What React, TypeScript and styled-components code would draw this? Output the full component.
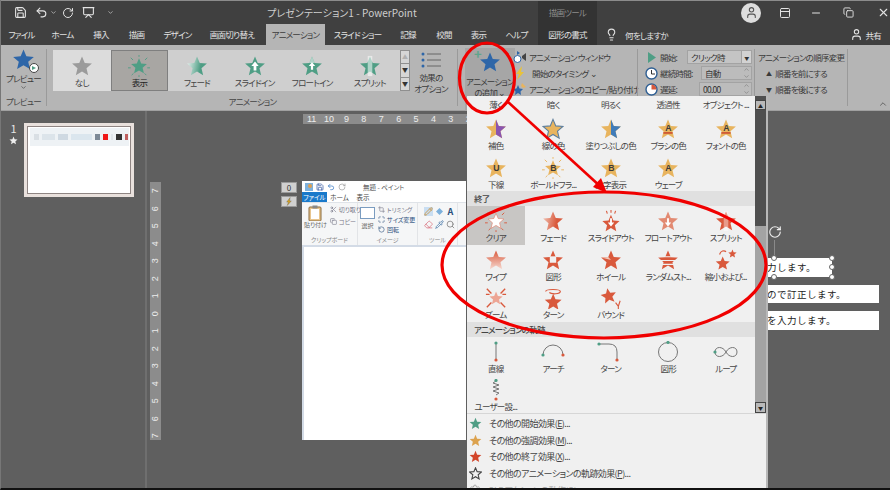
import React from "react";
import styled, { createGlobalStyle, css } from "styled-components";
import { Undo2, RotateCw, Presentation, Lightbulb, User, X, Minus, Copy, ChevronDown, ChevronUp, Save, PanelTop, Scissors, Pencil, Search, Pipette, Eraser, Crop, Maximize, RotateCcw, Settings } from "lucide-react";

const Global = createGlobalStyle`
  html, body { margin: 0; padding: 0; background: #5f5f5f; }
  * { box-sizing: border-box; }
  body { font-family: "Noto Sans CJK JP", "Noto Sans", sans-serif; font-feature-settings: "palt"; }
`;
const narrow = css`font-size: 8.5px; letter-spacing: -.75px;`;

const Page = styled.div`
  position: relative; width: 890px; height: 490px; overflow: hidden; background: #5f5f5f;
  display: flex; flex-direction: column; border-bottom: 2px solid #111; border-left: 1px solid #777;
`;
const TitleBar = styled.div`
  height: 24px; background: #404040; display: flex; align-items: center; color: #d8d8d8; flex: none;
  border-top: 1px solid #8c8c8c; padding-left: 14px; margin-left: -1px; position: relative;
`;
const QuickIcons = styled.div`display: flex; align-items: center; gap: 8px; width: 253px; color: #e4e4e4;`;
const DocTitle = styled.div`font-size: 10px; width: 271px; color: #cfcfcf; white-space: nowrap; letter-spacing: .05px;`;
const ToolTitle = styled.div`
  width: 59px; height: 100%; background: #333; color: #8d8d8d; ${narrow} text-align: center; line-height: 23px;
`;
const WindowIcons = styled.div`margin-left: auto; display: flex; align-items: center; gap: 15px; color: #e2e2e2;`;
const Avatar = styled.div`
  width: 20px; height: 20px; border-radius: 50%; background: #dedede; color: #555; display: flex; align-items: center; justify-content: center; margin-right: 3px;
`;
const TabBar = styled.div`height: 21px; background: #404040; display: flex; align-items: stretch; flex: none; margin-left: -1px;`;
const Tab = styled.div<{ $w: number; $active?: boolean; $dark?: boolean; $gap?: number }>`
  width: ${p => p.$w}px; margin-left: ${p => p.$gap || 0}px; text-align: center; ${narrow} line-height: 21px; white-space: nowrap;
  color: ${p => (p.$active ? "#3c3c3c" : "#e2e2e2")};
  background: ${p => (p.$active ? "#b5b5b5" : p.$dark ? "#333" : "transparent")};
`;
const TellMe = styled.div`display: flex; align-items: center; gap: 7px; margin-left: 8px; ${narrow} color: #e2e2e2;`;
const Share = styled.div`margin-left: auto; display: flex; align-items: center; gap: 2px; padding-right: 9px; ${narrow} color: #e2e2e2;`;

const Ribbon = styled.div`height: 66px; background: #b5b5b5; display: flex; flex: none; border-bottom: 1px solid #a0a0a0; color: #3a3a3a; position: relative; margin-left: -1px;`;
const Group = styled.div<{ $w: number }>`
  width: ${p => p.$w}px; flex: none; display: flex; flex-direction: column; position: relative;
  &::after { content: ""; position: absolute; right: 0; top: 4px; bottom: 4px; width: 1px; background: #9a9a9a; }
`;
const GroupBody = styled.div`flex: 1; display: flex; min-height: 0;`;
const GroupLabel = styled.div`height: 15px; ${narrow} line-height: 13px; text-align: center; color: #444;`;
const PreviewBtn = styled.div`flex: 1; display: flex; flex-direction: column; align-items: center; padding-top: 3px; ${narrow} line-height: 11px;`;
const IconStack = styled.div`position: relative; height: 25px; width: 28px; display: flex; justify-content: center; flex: none;`;
const PlayBadge = styled.div`
  position: absolute; right: -1px; bottom: 0; width: 10px; height: 10px; border-radius: 50%; background: #fff; border: 1px solid #444;
  &::after { content: ""; position: absolute; left: 2.5px; top: 1.5px; border-left: 4px solid #4f9e85; border-top: 2.5px solid transparent; border-bottom: 2.5px solid transparent; }
`;
const PlusBadge = styled.span`position: absolute; left: -2px; top: -4px; color: #5fa58c; font-size: 13px; font-weight: 700; line-height: 13px; letter-spacing: 0;`;
const EffectGallery = styled.div`
  margin: 5px 0 0 6px; width: 357px; height: 41px; background: #cfcfcf; display: flex; flex: none;
`;
const EffectCell = styled.div<{ $state?: string }>`
  width: 57.6px; flex: none; display: flex; flex-direction: column; align-items: center; padding-top: 4px; ${narrow} line-height: 11px; white-space: nowrap;
  background: ${p => (p.$state === "none" ? "#dcdcdc" : p.$state === "selected" ? "#a8a6a3" : "transparent")};
  border: ${p => (p.$state === "selected" ? "1px solid #7f7f7f" : "1px solid transparent")};
  color: ${p => (p.$state === "selected" ? "#222" : "#444")};
`;
const GalleryScroll = styled.div`margin-left: auto; width: 10px; display: flex; flex-direction: column; border: 1px solid #8f8f8f; background: #d6d6d6;`;
const GalleryScrollBtn = styled.div<{ $faint?: boolean }>`
  flex: 1; display: flex; align-items: center; justify-content: center; border-bottom: 1px solid #8f8f8f; color: ${p => (p.$faint ? "#b0b0b0" : "#333")};
  font-size: 6px; line-height: 1; &:last-child { border-bottom: 0; }
`;
const Options = styled.div`width: 48px; flex: none; display: flex; flex-direction: column; align-items: center; padding: 6px 0 0 0; ${narrow} line-height: 11px; text-align: center; white-space: nowrap; margin-left: -3px;`;
const AddButton = styled.div`
  width: 50px; margin: 3px 0 0 7px; height: 63px; padding-top: 3px; background: #a6a6a6; display: flex; flex-direction: column; align-items: center; ${narrow} line-height: 10.5px; white-space: nowrap; flex: none;
`;
const CmdList = styled.div`display: flex; flex-direction: column; padding: 4px 0 0 0; margin-left: -2px; ${narrow} color: #3a3a3a;`;
const Cmd = styled.div`height: 16px; display: flex; align-items: center; gap: 2px; white-space: nowrap;`;
const CmdIcon = styled.div`width: 14px; height: 14px; flex: none; display: flex; align-items: center; justify-content: center;`;
const TimingList = styled.div`flex: 1; display: flex; flex-direction: column; padding: 4px 3px 0 6px; ${narrow}`;
const TimingRow = styled.div`height: 16px; display: flex; align-items: center; gap: 2px; white-space: nowrap;`;
const Field = styled.div<{ $w: number; $lite?: boolean }>`
  width: ${p => p.$w}px; height: 14px; margin-left: auto; background: ${p => (p.$lite ? "#c4c4c4" : "#bcbcbc")}; border: 1px solid #a3a3a3;
  display: flex; align-items: center; padding-left: 3px; color: #333;
`;
const SpinBox = styled.div`margin-left: auto; width: 10px; display: flex; flex-direction: column; align-items: center; color: #777;`;
const DropBtn = styled.div`margin-left: auto; width: 10px; height: 100%; background: #d2d2d2; border-left: 1px solid #a3a3a3; display: flex; align-items: center; justify-content: center; font-size: 5px;`;
const OrderList = styled.div`display: flex; flex-direction: column; padding: 4px 0 0 3px; ${narrow} white-space: nowrap;`;
const OrderRow = styled.div`height: 16px; display: flex; align-items: center; gap: 4px; padding-left: 8px;`;
const OrderTitle = styled.div`height: 16px; line-height: 16px;`;
const Collapse = styled.div`position: absolute; right: 2px; bottom: 1px; color: #555; display: flex;`;

const Main = styled.div`flex: 1; display: flex; min-height: 0; margin-left: -1px;`;
const SlidePane = styled.div`width: 147px; flex: none; border-right: 2px solid #6f6f6f; display: flex; padding: 12px 0 0 9px; gap: 6px;`;
const ThumbNum = styled.div`color: #e6e6e6; font-size: 11px; line-height: 11px; width: 9px; display: flex; flex-direction: column; align-items: center; gap: 2px; padding-top: 0;`;
const Thumb = styled.div`width: 110px; height: 74px; background: #fff; border: 3px solid #e9e1dd; outline: 1px solid #8f8583; outline-offset: -4px; padding: 2px 2px 0 3px;`;
const ThumbTop = styled.div`height: 18px; background: #eef2f5; display: flex; align-items: center; gap: 3px; padding: 0 1px 0 4px;`;
const ThumbBlock = styled.div<{ $c: string; $w?: number; $push?: boolean }>`width: ${p => p.$w || 5}px; height: 6px; background: ${p => p.$c}; margin-left: ${p => (p.$push ? "auto" : "0")};`;

const Editor = styled.div`flex: 1; display: flex; flex-direction: column; padding-top: 3px; min-width: 0;`;
const HRuler = styled.div`
  margin-left: 156px; width: 165px; height: 10px; background: #8c8c8c; color: #ececec; font-size: 9px; line-height: 10px; display: flex; flex: none; font-family: "Liberation Sans", sans-serif;
`;
const HTick = styled.span`width: 17.4px; text-align: center; flex: none;`;
const Stage = styled.div`display: flex; align-items: flex-start; padding-top: 57px;`;
const VRuler = styled.div`
  width: 11px; height: 258px; margin: 1px 0 0 3px; background: #8c8c8c; color: #ececec; font-size: 9px; display: flex; flex-direction: column; align-items: center; flex: none; font-family: "Liberation Sans", sans-serif;
`;
const VTick = styled.span`height: 17.5px; line-height: 17.5px; transform: rotate(-90deg); flex: none;`;
const Tags = styled.div`margin: 1px 0 0 120px; width: 16px; display: flex; flex-direction: column; gap: 3px; flex: none;`;
const TagChip = styled.div`height: 11px; background: #d0d0d0; border: 1px solid #9a9a9a; color: #333; font-size: 8px; line-height: 9px; text-align: center; display: flex; align-items: center; justify-content: center;`;
const PaintWindow = styled.div`width: 164px; height: 259px; margin-left: 5px; background: #fff; flex: none; display: flex; flex-direction: column; overflow: hidden;`;
const PaintTitle = styled.div`height: 11px; display: flex; align-items: center; gap: 3px; font-size: 6.5px; color: #555; padding-left: 3px;`;
const PaintTabs = styled.div`height: 11px; display: flex; font-size: 6.5px; line-height: 11px; color: #444; border-bottom: 1px solid #dfe3e8;`;
const PaintTab = styled.div<{ $w: number; $file?: boolean }>`width: ${p => p.$w}px; text-align: center; background: ${p => (p.$file ? "#1979ca" : "transparent")}; color: ${p => (p.$file ? "#fff" : "#444")};`;
const PaintRibbon = styled.div`height: 44px; background: #f5f6f7; display: flex; border-bottom: 2px solid #d3dbe6; font-size: 6px; color: #666; flex: none;`;
const PaintGroup = styled.div<{ $w: number }>`width: ${p => p.$w}px; flex: none; border-right: 1px solid #e2e4e7; display: flex; flex-direction: column;`;
const PaintBody = styled.div`flex: 1; display: flex; padding: 2px 2px 0; gap: 3px; min-height: 0;`;
const PaintLabel = styled.div`height: 10px; line-height: 9px; text-align: center; color: #888;`;
const PaintBig = styled.div`width: 24px; display: flex; flex-direction: column; align-items: center; line-height: 8px; white-space: nowrap;`;
const PaintSmalls = styled.div`display: flex; flex-direction: column; gap: 1px; line-height: 9px; white-space: nowrap; color: #778;`;
const PaintSmall = styled.div`display: flex; align-items: center; gap: 2px;`;
const ToolGrid = styled.div`display: grid; grid-template-columns: repeat(3, 11px); grid-auto-rows: 13px; gap: 0; padding-left: 3px; align-items: center; justify-items: center;`;
const PaintCanvas = styled.div`flex: 1; background: #fff; border-left: 2px solid #d3dbe6;`;
const Boxes = styled.div`margin-left: 301px; width: 112px; display: flex; flex-direction: column; align-items: flex-start; flex: none; margin-top: 44px;`;
const Rotator = styled.div`
  height: 33px; width: 16px; margin-left: 1px; color: #eee; display: flex; position: relative;
  &::after { content: ""; position: absolute; left: 6px; top: 15px; bottom: 0; width: 1px; background: #8a8a8a; }
`;
const TextBox = styled.div<{ $w: number; $gap: number }>`
  position: relative; width: ${p => p.$w}px; height: 18.5px; background: #fff; margin-top: ${p => p.$gap}px; font-size: 9.5px; line-height: 18px; letter-spacing: .5px; color: #222; white-space: nowrap; font-feature-settings: normal;
`;
const Handle = styled.span<{ $x: number; $y: number }>`
  position: absolute; left: ${p => p.$x - 3}px; top: ${p => p.$y - 3}px; width: 6px; height: 6px; border-radius: 50%; background: #fff; border: 1px solid #666;
`;

const Dropdown = styled.div`
  position: absolute; left: 466px; top: 96px; width: 301px; height: 392px; background: #f0f0f0; border-right: 2px solid #b8b8b8; display: flex; flex-direction: column; overflow: hidden;
`;
const DropTop = styled.div`height: 318px; display: flex; flex: none; border-bottom: 1px solid #d6d6d6;`;
const DropItems = styled.div`width: 288px; flex: none;`;
const ItemRow = styled.div<{ $h?: number }>`display: grid; grid-template-columns: repeat(5, 57.5px); height: ${p => p.$h || 38.5}px;`;
const Item = styled.div<{ $hover?: boolean }>`
  display: flex; flex-direction: column; align-items: center; padding-top: 4px; ${narrow} line-height: 11px; color: #444; white-space: nowrap;
  background: ${p => (p.$hover ? "#c8c6c4" : "transparent")};
`;
const LabelOnly = styled(Item)`padding-top: 3px;`;
const Heading = styled.div`height: 15px; background: #e0e0e0; ${narrow} line-height: 15px; font-weight: 500; padding-left: 7px; color: #444;`;
const DropBar = styled.div`width: 11px; margin-left: 0; background: #4f4f4f; display: flex; flex-direction: column; flex: none;`;
const BarBtn = styled.div`height: 10px; background: #b9b9b9; border: 1px solid #444; margin-top: 4px; display: flex; align-items: center; justify-content: center; font-size: 5px; color: #222; flex: none;`;
const BarDown = styled(BarBtn)`margin-top: 0; height: 11px;`;
const BarThumb = styled.div`height: 176px; background: #a3a3a3; margin-top: auto; flex: none;`;
const MenuList = styled.div`padding-top: 1.5px; display: flex; flex-direction: column;`;
const MenuItem = styled.div<{ $off?: boolean }>`
  height: 16.6px; display: flex; align-items: center; font-size: 9px; letter-spacing: -.6px; color: ${p => (p.$off ? "#a8a8a8" : "#444")}; padding-left: 2px; gap: 7px; white-space: nowrap; flex: none;
  u { text-underline-offset: 1px; }
`;
const Annotations = styled.svg`position: absolute; left: 0; top: 0; width: 890px; height: 490px; pointer-events: none;`;
const Defs = styled.svg`position: absolute; width: 0; height: 0;`;

const PTS = "12,1.5 15,8.6 22.8,9.3 16.9,14.4 18.7,22 12,18 5.3,22 7.1,14.4 1.2,9.3 9,8.6";
const RIGHT = "12,1.5 15,8.6 22.8,9.3 16.9,14.4 18.7,22 12,18";
const OR = "#e8b45e", RD = "#d9593c", GR = "#4f9e85", BL = "#2e66a8";

const Rays: React.FC<{ c: string }> = ({ c }) => (
  <g stroke={c} strokeWidth="1">
    <path d="M12 0v2M3 3l2.5 2.5M21 3l-2.5 2.5M0 14h3M24 14h-3M4 22l2-2M20 22l-2-2M12 24v-2" />
  </g>
);
const Letter: React.FC<{ t: string; bar?: boolean; y?: number }> = ({ t, bar, y = 15.5 }) => (
  <>
    <text x="12" y={y} textAnchor="middle" fontSize="9.5" fontWeight="700" fill="#3b3b3b" fontFamily="Liberation Sans">{t}</text>
    {bar && <rect x="7" y="15.5" width="10" height="1.6" fill="#c9442c" />}
  </>
);

function art(kind: string, c: string) {
  const star = <polygon points={PTS} fill={c} />;
  switch (kind) {
    case "none": return <polygon points={PTS} fill="#9b9b9b" />;
    case "appear": return <g><polygon points={PTS} fill={GR} transform="translate(2.4 2.4) scale(.8)" /><Rays c={GR} /></g>;
    case "fade": return <polygon points={PTS} fill={c === GR ? "url(#fadeG)" : "url(#fadeR)"} />;
    case "slide": return <g>{star}<path d="M12 7l4 5h-2.5v5h-3v-5H8z" fill="#fff" /></g>;
    case "float": return <g>{star}<path d="M12 8l3.5 4H13.2v4h-2.4v-4H8.5z" fill="#fff" /><polygon points="12,1.5 15,8.6 9,8.6" fill="#fff" opacity=".55" /></g>;
    case "split": return <g>{star}<rect x="9.5" y="1" width="5" height="22" fill="#fff" opacity=".55" /></g>;
    case "comp": return <g>{star}<polygon points={RIGHT} fill="#8a55b0" /></g>;
    case "line": return <polygon points={PTS} fill={OR} stroke="#5c7d9c" strokeWidth="1.2" />;
    case "fillc": return <g>{star}<polygon points={RIGHT} fill="#3f7cba" /></g>;
    case "A": return <g>{star}<Letter t="A" bar y={14.5} /></g>;
    case "U": return <g>{star}<Letter t="U" /></g>;
    case "Bf": return <g><polygon points={PTS} fill={OR} transform="translate(2.4 2.4) scale(.8)" /><Rays c={OR} /><Letter t="B" /></g>;
    case "B": return <g>{star}<Letter t="B" /></g>;
    case "wave": return <g>{star}<Letter t="A" /></g>;
    case "clear": return <g><polygon points={PTS} fill="#fff" stroke="#e07a64" strokeWidth=".8" transform="translate(2.4 2.4) scale(.8)" /><Rays c="#d9593c" /></g>;
    case "slideout": return <g><polygon points={PTS} fill={c} transform="translate(1.5 4) scale(.87)" /><path d="M12 18l-3.5-4.5H11V9h2v4.5h2.5z" fill="#fff" /><path d="M12 0v3M7 1l1 3M17 1l-1 3" stroke={c} strokeWidth="1.2" /></g>;
    case "floatout": return <g><polygon points={PTS} fill="#e28a72" /><path d="M12 18l-3.5-4.5H11V9h2v4.5h2.5z" fill="#fff" /></g>;
    case "splitout": return <g>{star}<rect x="9.5" y="1" width="5" height="22" fill="#fff" opacity=".4" /></g>;
    case "wipe": return <polygon points={PTS} fill="url(#wipeR)" />;
    case "shape": return <g>{star}<rect x="8.5" y="8" width="7" height="7" fill="#f0f0f0" /></g>;
    case "wheel": return <g>{star}<polygon points="12,12 1.2,9.3 9,8.6" fill="#f0c7b9" /></g>;
    case "random": return <g>{star}<path d="M0 8.5h24M0 12.5h24M0 16.8h24" stroke="#f0f0f0" strokeWidth="1.2" /></g>;
    case "shrink": return <g><polygon points={PTS} fill={c} transform="translate(0 7) scale(.7)" /><polygon points={PTS} fill={c} transform="translate(14 0) scale(.42)" /><path d="M5 6c1-4 5-5 7-3" fill="none" stroke={c} strokeWidth="1.3" /></g>;
    case "zoom": return <g><polygon points={PTS} fill="#eda594" transform="translate(4 4) scale(.67)" /><path d="M2 2l5 5M22 2l-5 5M2 22l5-5M22 22l-5-5M1 8h4M23 8h-4" stroke={c} strokeWidth="1.5" /></g>;
    case "turn": return <g><polygon points={PTS} fill={c} transform="translate(2 6) scale(.85)" /><path d="M4 5c0-3 16-3 16 0s-10 3-12 1" fill="none" stroke={c} strokeWidth="1.3" /></g>;
    case "bounce": return <g><polygon points={PTS} fill={c} transform="translate(0 0) scale(.78) rotate(-10 12 12)" /><path d="M17 17l3 4 2-6M20 21v3" fill="none" stroke={c} strokeWidth="1.2" /></g>;
    default: return star;
  }
}
const Art: React.FC<{ k: string; c?: string; s?: number }> = ({ k, c = RD, s = 22 }) => (
  <svg width={s} height={s} viewBox="0 0 24 24" style={{ flex: "none" }}>{art(k, c)}</svg>
);

const Dot: React.FC<{ x: number; y: number; c: string }> = ({ x, y, c }) => <circle cx={x} cy={y} r="1.6" fill={c} />;
const Motion: React.FC<{ k: string }> = ({ k }) => (
  <svg width="40" height="22" viewBox="0 0 40 22" style={{ flex: "none" }}>
    <g fill="none" stroke="#777" strokeWidth="1">
      {k === "line" && <path d="M20 2v17" />}
      {k === "arc" && <path d="M10 14a10 10 0 0 1 20 0" />}
      {k === "turn" && <path d="M8 3h10q8 0 8 8v8" />}
      {k === "circle" && <circle cx="20" cy="11" r="9.5" />}
      {k === "loop" && <path d="M20 11c-3-6-11-6-11 0s8 6 11 0 11-6 11 0-8 6-11 0" />}
      {k === "custom" && <path d="M20 3l-3 2 6 2-6 2 6 2-6 2 6 2-3 2" transform="translate(0 -1)" />}
    </g>
    {k === "line" && <><Dot x={20} y={2} c={GR} /><Dot x={20} y={19} c={RD} /></>}
    {k === "arc" && <><Dot x={10} y={14} c={GR} /><Dot x={30} y={14} c={RD} /></>}
    {k === "turn" && <><Dot x={8} y={3} c={GR} /><Dot x={26} y={19} c={RD} /></>}
    {k === "circle" && <Dot x={20} y={1.5} c={GR} />}
    {k === "loop" && <Dot x={9} y={11} c={GR} />}
    {k === "custom" && <><Dot x={20} y={1.5} c={GR} /><Dot x={20} y={20} c={RD} /></>}
  </svg>
);

const effects = [
  { k: "none", l: "なし", c: "#9b9b9b", s: "none" },
  { k: "appear", l: "表示", c: GR, s: "selected" },
  { k: "fade", l: "フェード", c: GR },
  { k: "slide", l: "スライドイン", c: GR },
  { k: "float", l: "フロートイン", c: GR },
  { k: "split", l: "スプリット", c: GR },
];
const row1 = ["薄く", "暗く", "明るく", "透過性", "オブジェクト ..."];
const row2: [string, string][] = [["comp", "補色"], ["line", "線の色"], ["fillc", "塗りつぶしの色"], ["A", "ブラシの色"], ["A", "フォントの色"]];
const row3: [string, string][] = [["U", "下線"], ["Bf", "ボールドフラ..."], ["B", "太字表示"], ["wave", "ウェーブ"]];
const row4: [string, string][] = [["clear", "クリア"], ["fade", "フェード"], ["slideout", "スライドアウト"], ["floatout", "フロートアウト"], ["splitout", "スプリット"]];
const row5: [string, string][] = [["wipe", "ワイプ"], ["shape", "図形"], ["wheel", "ホイール"], ["random", "ランダムスト..."], ["shrink", "縮小および..."]];
const row6: [string, string][] = [["zoom", "ズーム"], ["turn", "ターン"], ["bounce", "バウンド"]];
const row7: [string, string][] = [["line", "直線"], ["arc", "アーチ"], ["turn", "ターン"], ["circle", "図形"], ["loop", "ループ"]];

const Stars: React.FC<{ items: [string, string][]; c: string; hoverFirst?: boolean }> = ({ items, c, hoverFirst }) => (
  <ItemRow>
    {items.map(([k, l], i) => (
      <Item key={l} $hover={hoverFirst && i === 0}><Art k={k} c={c} />{l}</Item>
    ))}
  </ItemRow>
);
const hTicks = ["11", "10", "9", "8", "7", "6", "5", "4", "3", "2"];
const vTicks = ["7", "6", "5", "4", "3", "2", "1", "0", "1", "2", "3", "4", "5", "6", "7"];

export default function App() {
  return (
    <Page>
      <Global />
      <Defs>
        <defs>
          <linearGradient id="fadeG" x1="0" x2="1" y1="0.3" y2="0.5"><stop offset="0" stopColor="#e6f2ee" /><stop offset=".7" stopColor={GR} /></linearGradient>
          <linearGradient id="fadeR" x1="0" x2="1" y1="0.3" y2="0.5"><stop offset="0" stopColor="#f0c0b0" /><stop offset=".7" stopColor={RD} /></linearGradient>
          <linearGradient id="wipeR" x1="0" x2="0" y1="0" y2="1"><stop offset="0" stopColor={RD} /><stop offset="1" stopColor="#f6d8cf" /></linearGradient>
        </defs>
      </Defs>
      <TitleBar>
        <QuickIcons>
          <Save size={13} />
          <Undo2 size={13} />
          <ChevronDown size={7} style={{ marginLeft: -6 }} />
          <RotateCw size={12} style={{ marginLeft: -3 }} />
          <Presentation size={13} />
          <ChevronDown size={7} style={{ marginLeft: 4 }} />
        </QuickIcons>
        <DocTitle>プレゼンテーション1 - PowerPoint</DocTitle>
        <ToolTitle>描画ツール</ToolTitle>
        <WindowIcons>
          <Avatar><User size={13} /></Avatar>
          <PanelTop size={12} />
          <Minus size={12} style={{ marginLeft: 4 }} />
          <Copy size={11} style={{ marginLeft: 6 }} />
          <X size={13} style={{ marginLeft: 8 }} />
        </WindowIcons>
      </TitleBar>
      <TabBar>
        <Tab $w={43}>ファイル</Tab>
        <Tab $w={39}>ホーム</Tab>
        <Tab $w={38}>挿入</Tab>
        <Tab $w={33}>描画</Tab>
        <Tab $w={49}>デザイン</Tab>
        <Tab $w={60}>画面切り替え</Tab>
        <Tab $w={59} $gap={4} $active>アニメーション</Tab>
        <Tab $w={65}>スライド ショー</Tab>
        <Tab $w={36}>記録</Tab>
        <Tab $w={36}>校閲</Tab>
        <Tab $w={33}>表示</Tab>
        <Tab $w={43}>ヘルプ</Tab>
        <Tab $w={59} $dark>図形の書式</Tab>
        <TellMe><Lightbulb size={13} />何をしますか</TellMe>
        <Share><User size={13} />共有</Share>
      </TabBar>
      <Ribbon>
        <Group $w={47}>
          <GroupBody>
            <PreviewBtn>
              <IconStack>
                <Art k="star" c={BL} s={23} />
                <PlayBadge />
              </IconStack>
              プレビュー
              <ChevronDown size={7} />
            </PreviewBtn>
          </GroupBody>
          <GroupLabel>プレビュー</GroupLabel>
        </Group>
        <Group $w={411}>
          <GroupBody>
            <EffectGallery>
              {effects.map(e => (
                <EffectCell key={e.k} $state={e.s}><Art k={e.k} c={e.c} />{e.l}</EffectCell>
              ))}
              <GalleryScroll>
                <GalleryScrollBtn $faint>▲</GalleryScrollBtn>
                <GalleryScrollBtn>▼</GalleryScrollBtn>
                <GalleryScrollBtn>▼</GalleryScrollBtn>
              </GalleryScroll>
            </EffectGallery>
            <Options>
              <svg width="22" height="18" viewBox="0 0 22 18" style={{ flex: "none", marginBottom: 3 }}>
                <g fill={BL}><circle cx="3" cy="3" r="1.5" /><circle cx="3" cy="9" r="1.5" /><circle cx="3" cy="15" r="1.5" /></g>
                <path d="M7 3h14M7 9h14M7 15h14" stroke="#666" strokeWidth="1" />
              </svg>
              効果の
              <span>オプション</span>
            </Options>
          </GroupBody>
          <GroupLabel>アニメーション</GroupLabel>
        </Group>
        <Group $w={180}>
          <GroupBody>
            <AddButton>
              <IconStack>
                <Art k="star" c={BL} s={22} />
                <PlusBadge>+</PlusBadge>
              </IconStack>
              <span>アニメーション</span>
              <span>の追加 ⌄</span>
            </AddButton>
            <CmdList>
              <Cmd>
                <CmdIcon><svg width="14" height="14" viewBox="0 0 14 14"><circle cx="4.5" cy="9" r="3.5" fill="#fff" stroke={BL} /><path d="M4 1l3 2-3 2z" fill={BL} /><path d="M9 6l4-3v8l-4-3z" fill="#444" /></svg></CmdIcon>
                アニメーション ウィンドウ
              </Cmd>
              <Cmd>
                <CmdIcon><svg width="14" height="14" viewBox="0 0 14 14"><path d="M9 0L3 8h3l-2 6 7-8H8z" fill="#e8c23a" /></svg></CmdIcon>
                <span style={{ marginLeft: 3 }}>開始のタイミング ⌄</span>
              </Cmd>
              <Cmd>
                <CmdIcon><svg width="14" height="14" viewBox="0 0 14 14"><polygon points="5,3 6.5,6.5 10,7 7.5,9.5 8,13 5,11 2,13 2.5,9.5 0,7 3.5,6.5" fill={BL} /><path d="M9 1l4 4-3 1-2-2z" fill="#e8b45e" /></svg></CmdIcon>
                アニメーションのコピー/貼り付け
              </Cmd>
            </CmdList>
          </GroupBody>
        </Group>
        <Group $w={117}>
          <TimingList>
            <TimingRow>
              <CmdIcon><svg width="9" height="11" viewBox="0 0 9 11"><path d="M1 0l8 5.5L1 11z" fill={GR} /></svg></CmdIcon>
              開始:
              <Field $w={65} $lite>クリック時<DropBtn>▼</DropBtn></Field>
            </TimingRow>
            <TimingRow>
              <CmdIcon><svg width="13" height="13" viewBox="0 0 13 13"><circle cx="6.5" cy="6.5" r="5.5" fill="#fff" stroke="#2f5f93" strokeWidth="1.4" /><path d="M6.5 3v4H10" fill="none" stroke="#333" /></svg></CmdIcon>
              継続時間:
              <Field $w={51}>自動<SpinBox><ChevronUp size={7} /><ChevronDown size={7} /></SpinBox></Field>
            </TimingRow>
            <TimingRow>
              <CmdIcon><svg width="13" height="13" viewBox="0 0 13 13"><circle cx="6.5" cy="6.5" r="5.5" fill="#fff" stroke="#2f5f93" strokeWidth="1.4" /><path d="M6.5 6.5V1.5A5 5 0 0 1 11.5 6.5z" fill="#d9593c" /></svg></CmdIcon>
              遅延:
              <Field $w={53}>00.00<SpinBox><ChevronUp size={7} /><ChevronDown size={7} /></SpinBox></Field>
            </TimingRow>
          </TimingList>
        </Group>
        <Group $w={93}>
          <OrderList>
            <OrderTitle>アニメーションの順序変更</OrderTitle>
            <OrderRow><span style={{ fontSize: 6 }}>▲</span>順番を前にする</OrderRow>
            <OrderRow><span style={{ fontSize: 6 }}>▼</span>順番を後にする</OrderRow>
          </OrderList>
        </Group>
        <Collapse><ChevronUp size={10} /></Collapse>
      </Ribbon>
      <Main>
        <SlidePane>
          <ThumbNum>
            1
            <svg width="9" height="9" viewBox="0 0 24 24"><polygon points={PTS} fill="#eee" /></svg>
          </ThumbNum>
          <Thumb>
            <ThumbTop>
              <ThumbBlock $c="#d9dfe4" $w={5} />
              <ThumbBlock $c="#dce4ea" $w={14} />
              <ThumbBlock $c="#cfd9e2" $w={10} />
              <ThumbBlock $c="#dbe6ee" $w={22} />
              <ThumbBlock $c="#7d8996" $push />
              <ThumbBlock $c="#f01818" />
              <ThumbBlock $c="#dfe5ea" $w={3} />
              <ThumbBlock $c="#333" $w={6} />
              <ThumbBlock $c="#c06060" $w={3} />
            </ThumbTop>
          </Thumb>
        </SlidePane>
        <Editor>
          <HRuler>{hTicks.map((t, i) => <HTick key={i}>{t}</HTick>)}</HRuler>
          <Stage>
            <VRuler>{vTicks.map((t, i) => <VTick key={i}>{t}</VTick>)}</VRuler>
            <Tags>
              <TagChip>0</TagChip>
              <TagChip><svg width="8" height="9" viewBox="0 0 14 14"><path d="M9 0L3 8h3l-2 6 7-8H8z" fill="#d8a420" stroke="#555" strokeWidth=".6" /></svg></TagChip>
            </Tags>
            <PaintWindow>
              <PaintTitle>
                <svg width="8" height="8" viewBox="0 0 8 8"><rect width="8" height="8" fill="#7fb2dd" /><circle cx="5" cy="3" r="2" fill="#e0a050" /></svg>
                <Save size={8} color="#2b4f9c" />
                <Undo2 size={8} color="#2b70c0" />
                <RotateCw size={8} color="#999" />
                <span style={{ marginLeft: 14 }}>無題 - ペイント</span>
              </PaintTitle>
              <PaintTabs>
                <PaintTab $w={25} $file>ファイル</PaintTab>
                <PaintTab $w={25}>ホーム</PaintTab>
                <PaintTab $w={22}>表示</PaintTab>
              </PaintTabs>
              <PaintRibbon>
                <PaintGroup $w={56}>
                  <PaintBody>
                    <PaintBig>
                      <svg width="14" height="16" viewBox="0 0 14 16"><rect x="1" y="2" width="12" height="14" rx="1" fill="#e8c58e" stroke="#8a6a3c" /><rect x="3" y="4" width="8" height="10" fill="#fff" /><rect x="4.5" y="0.5" width="5" height="3" fill="#888" /></svg>
                      貼り付け
                    </PaintBig>
                    <PaintSmalls>
                      <PaintSmall><Scissors size={7} />切り取り</PaintSmall>
                      <PaintSmall style={{ marginTop: 2 }}><Copy size={7} />コピー</PaintSmall>
                    </PaintSmalls>
                  </PaintBody>
                  <PaintLabel>クリップボード</PaintLabel>
                </PaintGroup>
                <PaintGroup $w={60}>
                  <PaintBody>
                    <PaintBig>
                      <svg width="15" height="12" viewBox="0 0 15 12" style={{ marginTop: 2, marginBottom: 3 }}><rect x=".5" y=".5" width="14" height="11" fill="#fff" stroke="#7a9cc0" /></svg>
                      選択
                    </PaintBig>
                    <PaintSmalls>
                      <PaintSmall><Crop size={7} />トリミング</PaintSmall>
                      <PaintSmall style={{ color: "#2b4f7c" }}><Maximize size={7} />サイズ変更</PaintSmall>
                      <PaintSmall style={{ color: "#2b4f7c" }}><RotateCcw size={7} />回転</PaintSmall>
                    </PaintSmalls>
                  </PaintBody>
                  <PaintLabel>イメージ</PaintLabel>
                </PaintGroup>
                <PaintGroup $w={40}>
                  <PaintBody>
                    <ToolGrid>
                      <Pencil size={9} color="#c98a28" style={{ background: "#c9def2" }} />
                      <svg width="9" height="9" viewBox="0 0 9 9"><path d="M4.5 1L8 4.5 4.5 8 1 4.5z" fill="#7cb0dc" /></svg>
                      <span style={{ fontSize: 9, fontWeight: 700, color: "#2b4f7c", lineHeight: 1 }}>A</span>
                      <Eraser size={9} color="#d9707c" />
                      <Pipette size={9} color="#4a78a8" />
                      <Search size={9} color="#777" />
                    </ToolGrid>
                  </PaintBody>
                  <PaintLabel>ツール</PaintLabel>
                </PaintGroup>
              </PaintRibbon>
              <PaintCanvas />
            </PaintWindow>
            <Boxes>
              <Rotator><RotateCw size={14} /></Rotator>
              <TextBox $w={65} $gap={0}>
                力します。
                <Handle $x={7} $y={0} /><Handle $x={7} $y={19} /><Handle $x={65} $y={0} /><Handle $x={65} $y={9} /><Handle $x={65} $y={19} />
              </TextBox>
              <TextBox $w={112} $gap={8}>ので訂正します。</TextBox>
              <TextBox $w={112} $gap={8}>を入力します。</TextBox>
            </Boxes>
          </Stage>
        </Editor>
      </Main>

      <Dropdown>
        <DropTop>
          <DropItems>
            <ItemRow $h={18}>{row1.map(l => <LabelOnly key={l}>{l}</LabelOnly>)}</ItemRow>
            <Stars items={row2} c={OR} />
            <Stars items={row3} c={OR} />
            <Heading>終了</Heading>
            <Stars items={row4} c={RD} hoverFirst />
            <Stars items={row5} c={RD} />
            <Stars items={row6} c={RD} />
            <Heading>アニメーションの軌跡</Heading>
            <ItemRow>{row7.map(([k, l]) => <Item key={k}><Motion k={k} />{l}</Item>)}</ItemRow>
            <ItemRow><Item><Motion k="custom" />ユーザー設...</Item></ItemRow>
          </DropItems>
          <DropBar>
            <BarBtn>▲</BarBtn>
            <BarThumb />
            <BarDown>▼</BarDown>
          </DropBar>
        </DropTop>
        <MenuList>
          <MenuItem><Art k="star" c={GR} s={13} /><span>その他の開始効果(<u>E</u>)...</span></MenuItem>
          <MenuItem><Art k="star" c="#dca24e" s={13} /><span>その他の強調効果(<u>M</u>)...</span></MenuItem>
          <MenuItem><Art k="star" c="#d2452a" s={13} /><span>その他の終了効果(<u>X</u>)...</span></MenuItem>
          <MenuItem>
            <svg width="13" height="13" viewBox="0 0 24 24" style={{ flex: "none" }}><polygon points={PTS} fill="none" stroke="#444" strokeWidth="2" /></svg>
            <span>その他のアニメーションの軌跡効果(<u>P</u>)...</span>
          </MenuItem>
          <MenuItem $off><Settings size={12} /><span>OLE アクションの動作(O)...</span></MenuItem>
        </MenuList>
      </Dropdown>

      <Annotations viewBox="0 0 890 490">
        <ellipse cx="486" cy="78" rx="27.5" ry="35" fill="none" stroke="#f00000" strokeWidth="3.2" />
        <ellipse cx="603" cy="265" rx="162" ry="73" fill="none" stroke="#f00000" strokeWidth="3.2" />
        <path d="M507 102L600 187" stroke="#f00000" strokeWidth="2.6" />
        <polygon points="606,193 592,187 600,178" fill="#f00000" />
      </Annotations>
    </Page>
  );
}
